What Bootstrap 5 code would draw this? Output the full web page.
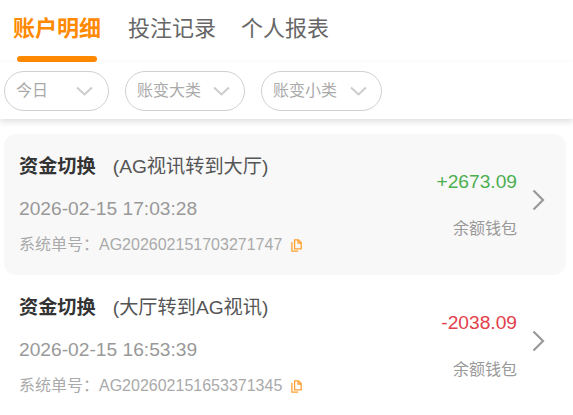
<!DOCTYPE html>
<html lang="zh-CN">
<head>
    <meta charset="UTF-8">
    <title>账户明细</title>
    <link href="https://cdn.jsdelivr.net/npm/bootstrap@5.3.3/dist/css/bootstrap.min.css" rel="stylesheet">
    <style>
        html, body {
            height: 415px;
            overflow: hidden;
        }
        body {
            font-family: "Liberation Sans", "Noto Sans CJK SC", sans-serif;
            background: #fff;
        }
        .tab-bar {
            height: 62px;
            padding-left: 13px;
            gap: 25px;
        }
        .tab-item {
            position: relative;
            font-size: 22px;
            line-height: 30px;
            padding-top: 14px;
            color: #666;
        }
        .tab-item.on {
            color: #ff8a00;
            font-weight: 700;
            margin-right: 2px;
        }
        .tab-item.on::after {
            content: "";
            position: absolute;
            left: 4px;
            right: 4px;
            top: 56px;
            height: 6px;
            border-radius: 3px;
            background: #ff8a00;
        }
        .filter-bar {
            height: 57px;
            padding: 9px 0 0 4px;
            gap: 16px;
            box-shadow: 0 3px 6px rgba(0, 0, 0, .12);
            position: relative;
        }
        .filter-pill {
            height: 40px;
            border: 1px solid #d0d0d0;
            border-radius: 20px;
            padding-left: 11px;
            font-size: 16px;
            color: #aaa;
            background: #fff;
        }
        .filter-pill svg {
            display: block;
            width: 17px;
            height: 10px;
        }
        .pill-day { width: 105px; gap: 28px; }
        .pill-big { width: 120px; gap: 12px; }
        .pill-small { width: 121px; gap: 13px; }
        .record-list {
            padding: 15px 7px 0 4px;
        }
        .record-row {
            height: 141px;
            border-radius: 12px;
            padding: 19px 21px 0 15px;
        }
        .record-row.hl {
            background: #f8f8f8;
        }
        .record-title {
            font-size: 19.2px;
            line-height: 27px;
            color: #555;
        }
        .record-title b {
            color: #333;
            margin-right: 17px;
        }
        .record-time {
            font-size: 19.2px;
            line-height: 27px;
            margin-top: 15px;
            color: #999;
        }
        .record-no {
            font-size: 16px;
            line-height: 22px;
            margin-top: 12px;
            color: #aaa;
        }
        .copy-icon {
            width: 11px;
            height: 13px;
            margin-left: 9px;
        }
        .record-side {
            text-align: right;
            padding-top: 15px;
            margin-right: 15px;
        }
        .money {
            font-size: 19.2px;
            line-height: 27px;
        }
        .money.up { color: #4caf50; }
        .money.down { color: #e2404a; }
        .wallet {
            font-size: 16px;
            line-height: 22px;
            margin-top: 23px;
            color: #999;
        }
        .arrow-icon {
            width: 13px;
            height: 22px;
            margin-top: 36px;
        }
    </style>
</head>
<body>
    <div class="tab-bar d-flex">
        <div class="tab-item on">账户明细</div>
        <div class="tab-item">投注记录</div>
        <div class="tab-item">个人报表</div>
    </div>

    <div class="filter-bar d-flex align-items-start">
        <div class="filter-pill pill-day d-flex align-items-center">
            <span>今日</span>
            <svg viewBox="0 0 17 10"><path d="M1 1.5l7.5 7 7.5-7" fill="none" stroke="#ccc" stroke-width="2"/></svg>
        </div>
        <div class="filter-pill pill-big d-flex align-items-center">
            <span>账变大类</span>
            <svg viewBox="0 0 17 10"><path d="M1 1.5l7.5 7 7.5-7" fill="none" stroke="#ccc" stroke-width="2"/></svg>
        </div>
        <div class="filter-pill pill-small d-flex align-items-center">
            <span>账变小类</span>
            <svg viewBox="0 0 17 10"><path d="M1 1.5l7.5 7 7.5-7" fill="none" stroke="#ccc" stroke-width="2"/></svg>
        </div>
    </div>

    <div class="record-list">
        <div class="record-row hl d-flex justify-content-between">
            <div>
                <div class="record-title"><b>资金切换</b>(AG视讯转到大厅)</div>
                <div class="record-time">2026-02-15 17:03:28</div>
                <div class="record-no d-flex align-items-center">系统单号：AG202602151703271747
                    <svg class="copy-icon" viewBox="0 0 11 13"><path d="M3.6.8h3.9L10.2 3.5V9.9H3.6zM7 .8v3.2h3.2M.9 3v9.2h6.3" fill="none" stroke="#ffa033" stroke-width="1.3"/></svg>
                </div>
            </div>
            <div class="d-flex">
                <div class="record-side">
                    <div class="money up">+2673.09</div>
                    <div class="wallet">余额钱包</div>
                </div>
                <svg class="arrow-icon" viewBox="0 0 13 22"><path d="M1.5 1.5L11 11l-9.5 9.5" fill="none" stroke="#999" stroke-width="2.2"/></svg>
            </div>
        </div>
        <div class="record-row d-flex justify-content-between">
            <div>
                <div class="record-title"><b>资金切换</b>(大厅转到AG视讯)</div>
                <div class="record-time">2026-02-15 16:53:39</div>
                <div class="record-no d-flex align-items-center">系统单号：AG202602151653371345
                    <svg class="copy-icon" viewBox="0 0 11 13"><path d="M3.6.8h3.9L10.2 3.5V9.9H3.6zM7 .8v3.2h3.2M.9 3v9.2h6.3" fill="none" stroke="#ffa033" stroke-width="1.3"/></svg>
                </div>
            </div>
            <div class="d-flex">
                <div class="record-side">
                    <div class="money down">-2038.09</div>
                    <div class="wallet">余额钱包</div>
                </div>
                <svg class="arrow-icon" viewBox="0 0 13 22"><path d="M1.5 1.5L11 11l-9.5 9.5" fill="none" stroke="#999" stroke-width="2.2"/></svg>
            </div>
        </div>
    </div>

    <script src="https://cdn.jsdelivr.net/npm/bootstrap@5.3.3/dist/js/bootstrap.bundle.min.js"></script>
</body>
</html>
